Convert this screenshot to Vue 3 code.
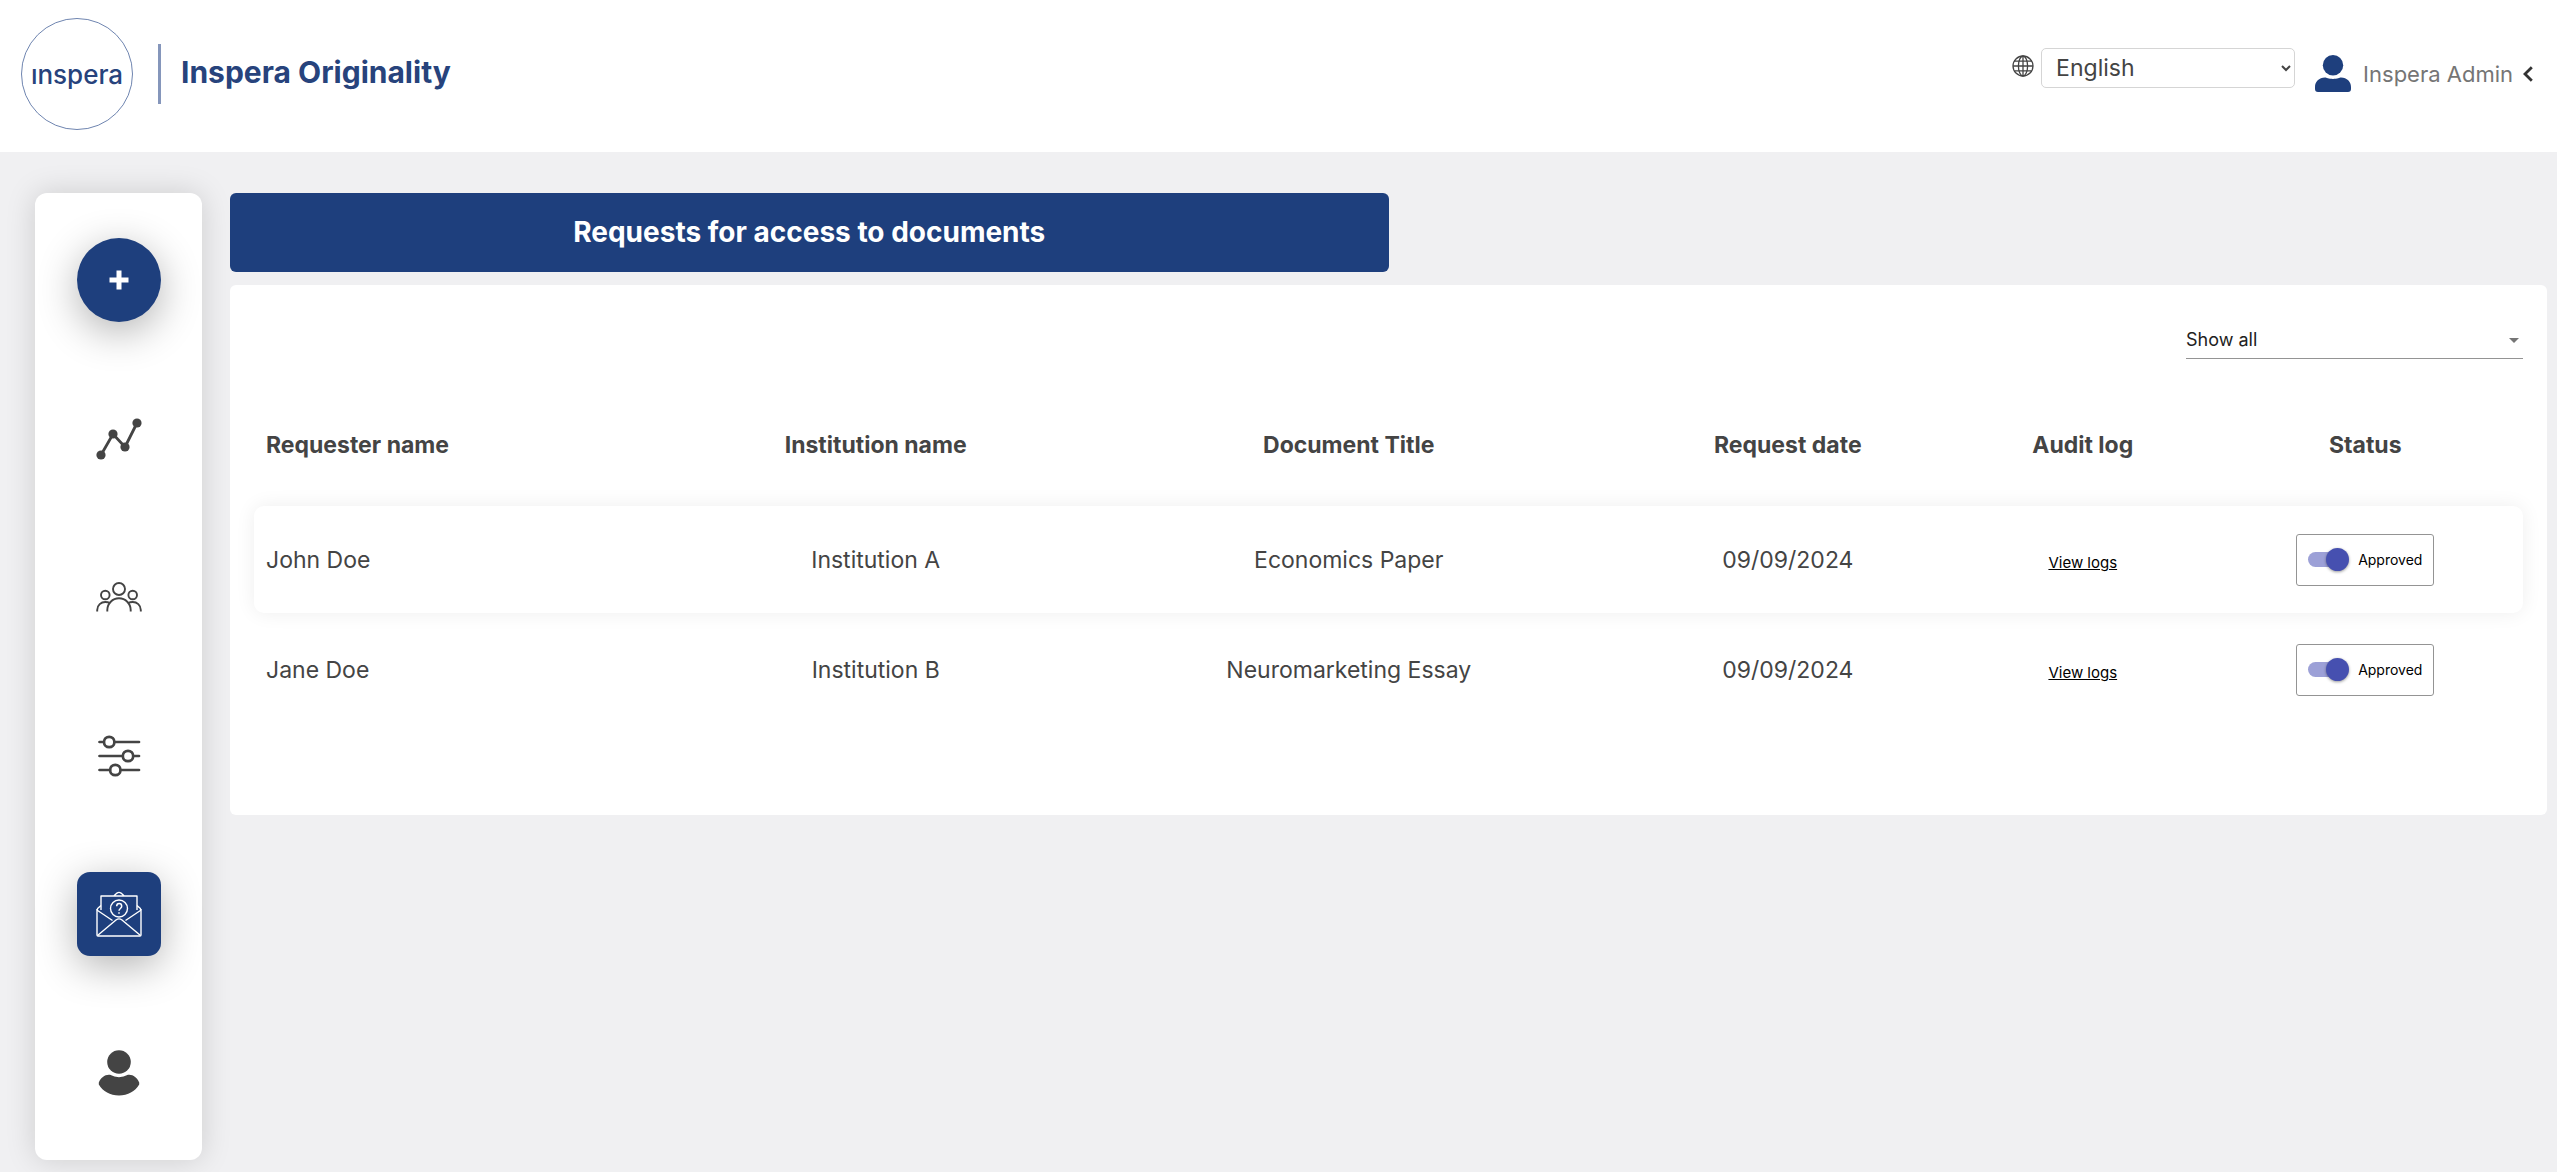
<script setup>
import { ref } from 'vue'

const language = ref('English')
const filter = ref('Show all')
const requests = ref([
  { id: 1, name: 'John Doe', institution: 'Institution A', title: 'Economics Paper', date: '09/09/2024', approved: true },
  { id: 2, name: 'Jane Doe', institution: 'Institution B', title: 'Neuromarketing Essay', date: '09/09/2024', approved: true }
])
</script>

<template>
  <div class="page">
    <header class="topbar">
      <a class="brand" href="#" aria-label="Home">
        <span class="brand-mark">ınspera</span>
        <span class="brand-divider"></span>
        <span class="brand-name">Inspera Originality</span>
      </a>
      <div class="tools">
        <div class="language">
          <label for="language" aria-label="Language">
            <svg class="globe" viewBox="0 0 22 22" fill="none" stroke="#444" stroke-width="1.3">
              <circle cx="11" cy="11" r="10" />
              <ellipse cx="11" cy="11" rx="4.6" ry="10" />
              <path d="M11 1v20M1 11h20M2.4 6.2h17.2M2.4 15.8h17.2" />
            </svg>
          </label>
          <select id="language" v-model="language" class="language-select">
            <option>English</option>
          </select>
        </div>
        <button class="account" type="button">
          <svg class="avatar" viewBox="0 0 36 37" fill="#1e3f7d">
            <circle cx="18" cy="10.2" r="10.2" />
            <path d="M10 22.6C11.5 22.6 13.5 24 18 24S24.5 22.6 26 22.6C32 22.6 36 27 36 32V34Q36 37 33 37H3Q0 37 0 34V32C0 27 4 22.6 10 22.6Z" />
          </svg>
          <span>Inspera Admin</span>
          <svg class="chevron" viewBox="0 0 10 16" fill="none" stroke="#333" stroke-width="2.8">
            <path d="M8.8 1.2L2 8l6.8 6.8" />
          </svg>
        </button>
      </div>
    </header>

    <div class="body">
      <nav class="sidebar" aria-label="Main">
        <button class="item round" type="button" aria-label="New submission">
          <svg viewBox="0 0 20 20" class="plus" stroke="#fff" stroke-width="5"><path d="M10 .5v19M.5 10h19" /></svg>
        </button>
        <a class="item" href="#" aria-label="Statistics">
          <svg viewBox="0 0 46 46" class="icon" fill="#444">
            <path d="M5 39L17 18L29 31L41 7" fill="none" stroke="#444" stroke-width="2.8" />
            <circle cx="5" cy="39" r="4.6" /><circle cx="17" cy="18" r="4.6" />
            <circle cx="29" cy="31" r="4.6" /><circle cx="41" cy="7" r="4.6" />
          </svg>
        </a>
        <a class="item" href="#" aria-label="Users">
          <svg viewBox="0 0 46 46" class="icon" fill="none" stroke="#444" stroke-width="1.9">
            <circle cx="23" cy="15" r="6" />
            <circle cx="9.3" cy="21" r="4.3" /><circle cx="36.7" cy="21" r="4.3" />
            <path d="M11.3 37.5V36a11.7 11.7 0 0 1 23.4 0V37.5" />
            <path d="M1.2 37.5V36c0-5 4-8 8-8 2 0 3.4.3 4.700 1M44.800 37.500V36c0-5-4-8-8-8-2 0-3.400.3-4.700 1" />
          </svg>
        </a>
        <a class="item" href="#" aria-label="Settings">
          <svg viewBox="0 0 46 46" class="icon" fill="none" stroke="#444" stroke-width="2.7" stroke-linecap="round">
            <path d="M3.5 9H7M19 9h24M3.5 23H26M38 23h5M3.5 37H14M25 37h18" />
            <circle cx="13.2" cy="9" r="5.2" /><circle cx="32" cy="23" r="5.2" /><circle cx="19.3" cy="37" r="5.2" />
          </svg>
        </a>
        <a class="item square" href="#" aria-label="Document requests" aria-current="page">
          <svg viewBox="0 0 46 46" class="icon" fill="none" stroke="#fff" stroke-width="1.4" stroke-linejoin="round">
            <path d="M5 19V5h36v14M18 4.8l3-2.7q2-1.4 4 0l3 2.7" />
            <path d="M5 14.5L1.6 17.5Q1 18.5 1.6 19.5L16.5 29.5M41 14.5L44.4 17.5Q45 18.5 44.4 19.5L29.5 29.5" />
            <path d="M1 18V44Q1 45 2 45H44Q45 45 45 44V18" />
            <path d="M1.5 44.5L20 29Q23 26.8 26 29L44.5 44.5" />
            <circle cx="23" cy="17.5" r="8.5" />
            <path d="M20.7 15.3c0-3.6 5-3.6 5 0 0 2.2-2.7 2.3-2.7 4.5M23 21.2v1.5" stroke-width="1.5" />
          </svg>
        </a>
        <a class="item" href="#" aria-label="Profile">
          <svg viewBox="0 0 46 46" class="icon" fill="#444">
            <circle cx="23" cy="12" r="11.8" />
            <path d="M14 24.8Q23 29.6 32 24.8C37 24.2 41 27.5 43.2 32.5V34.5C39 41.5 32 45.4 23 45.4S7 41.5 2.8 34.5V32.5C5 27.5 9 24.2 14 24.8Z" />
          </svg>
        </a>
      </nav>

      <main class="content">
        <h1 class="banner">Requests for access to documents</h1>
        <section class="panel">
          <div class="filter">
            <select v-model="filter" class="filter-select" aria-label="Filter by status">
              <option>Show all</option>
            </select>
            <svg class="filter-arrow" viewBox="0 0 10 5" fill="#757575"><path d="M0 0h10L5 5z" /></svg>
          </div>
          <table class="requests">
            <colgroup>
              <col class="c-name" /><col class="c-inst" /><col class="c-title" />
              <col class="c-date" /><col class="c-audit" /><col class="c-status" />
            </colgroup>
            <thead>
              <tr>
                <th scope="col">Requester name</th>
                <th scope="col">Institution name</th>
                <th scope="col">Document Title</th>
                <th scope="col">Request date</th>
                <th scope="col">Audit log</th>
                <th scope="col">Status</th>
              </tr>
            </thead>
            <tbody>
              <tr v-for="request in requests" :key="request.id">
                <td>{{ request.name }}</td>
                <td>{{ request.institution }}</td>
                <td>{{ request.title }}</td>
                <td>{{ request.date }}</td>
                <td><a class="logs" href="#">View logs</a></td>
                <td>
                  <label class="status">
                    <input v-model="request.approved" class="switch" type="checkbox" role="switch" />
                    <span>Approved</span>
                  </label>
                </td>
              </tr>
            </tbody>
          </table>
        </section>
      </main>
    </div>
  </div>
</template>

<style>
body {
  background: #f0f0f2;
}
</style>

<style scoped>
.page,
.page * {
  box-sizing: border-box;
}
.page {
  min-height: 100vh;
  background: #f0f0f2;
  color: #444;
  font-family: Inter, sans-serif;
  font-size: 23px;
}
button,
select {
  font: inherit;
  color: inherit;
}
svg {
  display: block;
  flex: none;
}
.topbar {
  display: flex;
  justify-content: space-between;
  height: 152px;
  padding: 18px 24px 0 21px;
  background: #fff;
}
.brand {
  display: flex;
  align-items: center;
  height: 112px;
  color: #27437c;
  text-decoration: none;
}
.brand-mark {
  display: flex;
  align-items: center;
  justify-content: center;
  width: 112px;
  height: 112px;
  border: 1px solid #6f85b0;
  border-radius: 50%;
  font-size: 26px;
  font-weight: 500;
}
.brand-divider {
  width: 3px;
  height: 60px;
  margin: 0 20px 0 25px;
  background: #8596bb;
}
.brand-name {
  padding-bottom: 4px;
  font-size: 30px;
  font-weight: 700;
}
.tools {
  display: flex;
  align-items: flex-start;
  gap: 20px;
  padding-top: 30px;
}
.language {
  display: flex;
  gap: 7px;
}
.globe {
  width: 22px;
  height: 22px;
  margin-top: 7px;
}
.language-select {
  width: 254px;
  height: 40px;
  padding: 0 0 0 10px;
  border: 1px solid #d5d5d5;
  border-radius: 5px;
  background-color: #fff;
}
.account {
  display: flex;
  align-items: center;
  padding: 7px 0 0;
  border: 0;
  background: none;
  color: #757575;
  font-size: 22px;
}
.avatar {
  width: 36px;
  height: 37px;
  margin-right: 12px;
}
.chevron {
  width: 10px;
  height: 16px;
  margin-left: 10px;
}
.body {
  display: flex;
  gap: 28px;
  padding: 41px 10px 12px 35px;
}
.sidebar {
  display: flex;
  flex: none;
  flex-direction: column;
  align-items: center;
  justify-content: space-between;
  width: 167px;
  min-height: calc(100vh - 205px);
  padding: 45px 0;
  border-radius: 12px;
  background: #fff;
  box-shadow: 0 0 30px rgba(0, 0, 0, 0.15);
}
.item {
  display: flex;
  align-items: center;
  justify-content: center;
  width: 84px;
  height: 84px;
  border: 0;
}
.round,
.square {
  background: #1e3f7d;
  box-shadow: 0 10px 40px rgba(0, 0, 0, 0.3);
}
.round {
  border-radius: 50%;
}
.square {
  border-radius: 13px;
}
.plus {
  width: 20px;
  height: 20px;
}
.icon {
  width: 46px;
  height: 46px;
}
.content {
  flex: 1;
  min-width: 0;
}
.banner {
  width: 50%;
  margin: 0 0 13px;
  border-radius: 6px;
  background: #1e3f7d;
  color: #fff;
  font-size: 28px;
  font-weight: 700;
  line-height: 79px;
  text-align: center;
}
.panel {
  padding: 36px 24px 89px;
  border-radius: 6px;
  background: #fff;
}
.filter {
  position: relative;
  width: 337px;
  margin: 0 0 24px auto;
}
.filter-select {
  display: block;
  width: 100%;
  height: 38px;
  padding: 0;
  border: 0;
  border-bottom: 1px solid #949494;
  border-radius: 0;
  appearance: none;
  background: none;
  color: #212121;
  font-size: 18px;
}
.filter-arrow {
  position: absolute;
  top: 17px;
  right: 4px;
  width: 10px;
  height: 5px;
  pointer-events: none;
}
.requests {
  width: 100%;
  border-collapse: separate;
  border-spacing: 0 3px;
  table-layout: fixed;
}
.c-name { width: 18.4%; }
.c-inst { width: 18%; }
.c-title { width: 23.7%; }
.c-date { width: 15%; }
.c-audit { width: 11%; }
.c-status { width: 13.9%; }
th,
td {
  padding: 0 12px;
  text-align: center;
}
th {
  height: 117px;
  font-weight: 700;
}
td {
  height: 107px;
}
th:first-child,
td:first-child {
  text-align: left;
}
tbody tr:first-child {
  border-radius: 10px;
  box-shadow: 0 0 20px rgba(0, 0, 0, 0.07);
}
.logs {
  color: #000;
  font-size: 15px;
}
.status {
  display: inline-flex;
  align-items: center;
  gap: 9px;
  height: 52px;
  padding: 0 11px;
  border: 1px solid #949494;
  border-radius: 3px;
  color: #000;
  font-size: 14px;
  vertical-align: middle;
}
.switch {
  position: relative;
  width: 41px;
  height: 23px;
  margin: 0;
  appearance: none;
}
.switch::before {
  position: absolute;
  top: 4px;
  left: 0;
  width: 37px;
  height: 15px;
  border-radius: 8px;
  background: #bbb;
  content: '';
}
.switch::after {
  position: absolute;
  top: 0;
  left: 0;
  width: 23px;
  height: 23px;
  border-radius: 50%;
  background: #fafafa;
  box-shadow: 0 1px 3px rgba(0, 0, 0, 0.4);
  content: '';
}
.switch:checked::before {
  background: #9ca0d7;
}
.switch:checked::after {
  left: 18px;
  background: #4650b0;
}
</style>
